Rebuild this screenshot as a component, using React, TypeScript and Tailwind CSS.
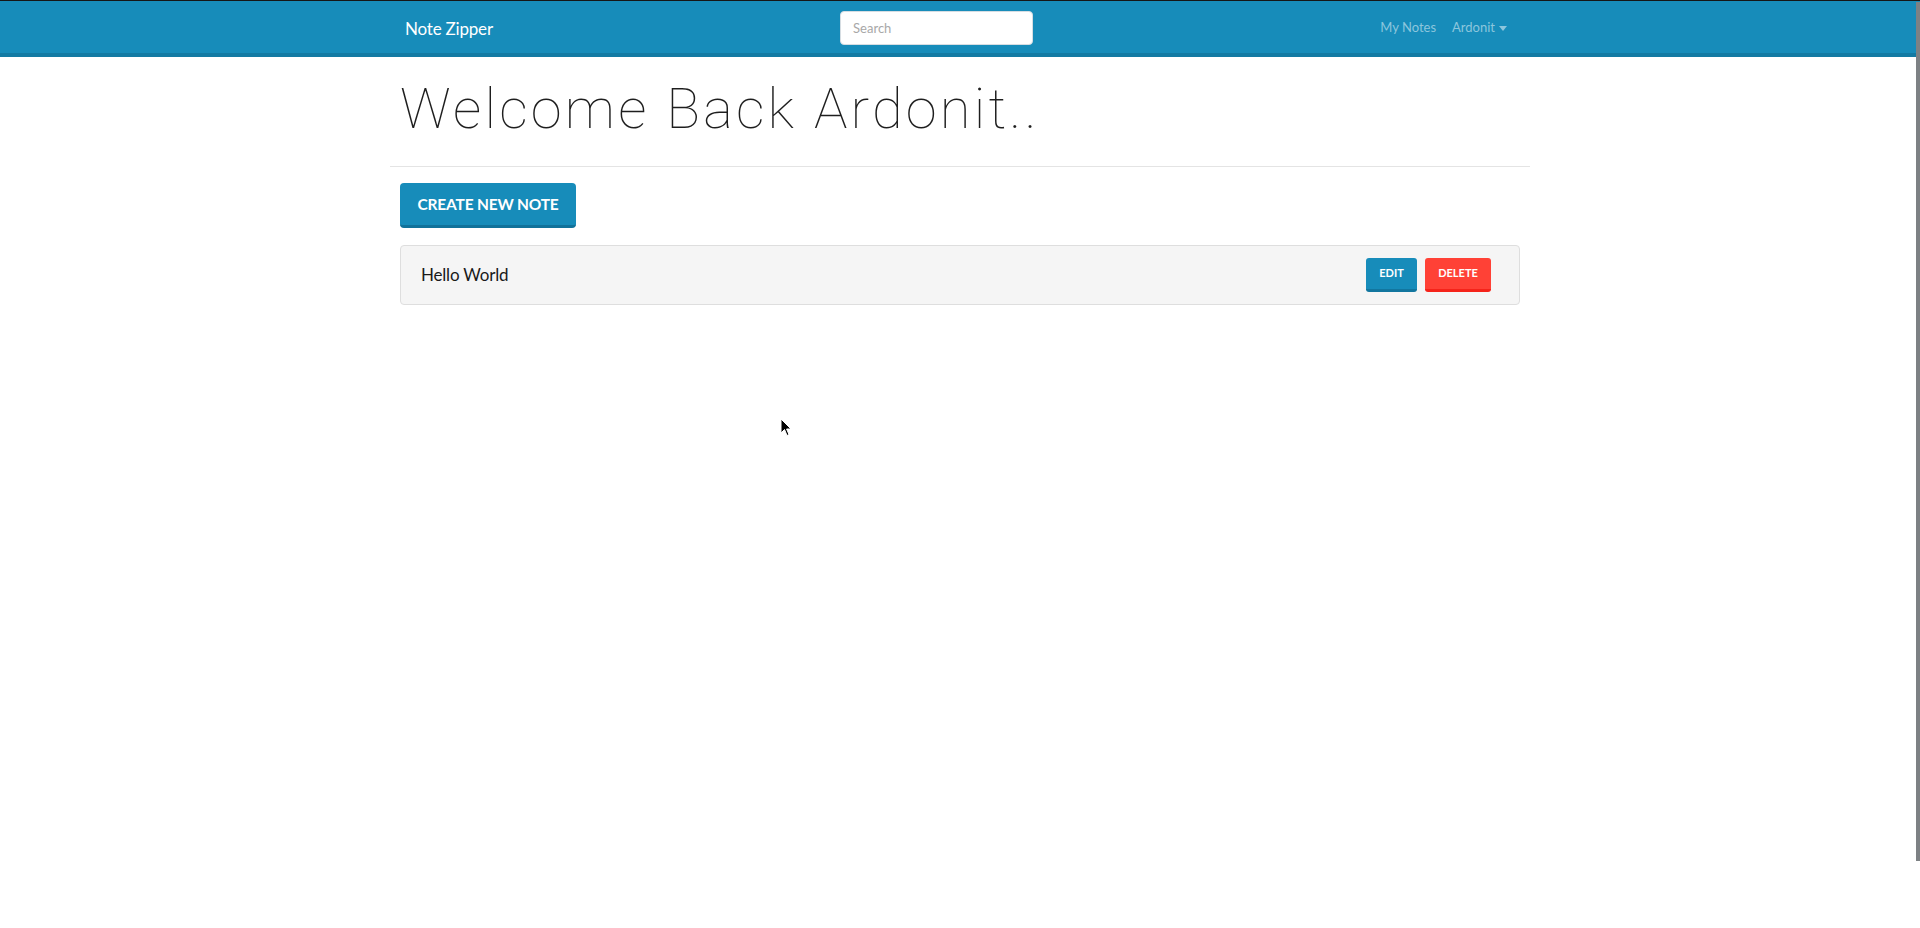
import React from "react";

export default function App() {
  return (
    <div className="relative min-h-screen bg-white font-['Lato','Liberation_Sans',sans-serif] text-[#222]">
      <nav className="h-[57px] bg-[#178cba] border-t border-t-[#161616] border-b-4 border-b-[#137aa3]">
        <div className="mx-auto flex h-full w-[1140px] items-center px-[15px] pt-[2px]">
          <span className="text-[17px] leading-none tracking-[-0.2px] text-white">Note Zipper</span>
          <div className="flex flex-1 justify-center">
            <input
              placeholder="Search"
              className="h-[34px] w-[193px] rounded-[4px] border border-[#d6dde2] bg-white px-[12px] text-[13px] text-[#222] placeholder:text-[#a8a8a8] outline-none"
            />
          </div>
          <div className="flex items-center gap-[16px] pr-[8px] text-[13px] text-[#8cc6dd]">
            <span>My Notes</span>
            <span className="flex items-center gap-[4px]">
              Ardonit
              <span className="inline-block h-0 w-0 border-x-[4px] border-t-[5px] border-x-transparent border-t-[#8cc6dd]" />
            </span>
          </div>
        </div>
      </nav>

      <main className="mx-auto w-[1140px]">
        <div className="px-[10px] pt-[19px] pb-[23px]">
          <h1 className="font-['Roboto',sans-serif] text-[56px] font-thin leading-[1.2] tracking-[3.2px] text-[#1e1e1e]">
            Welcome Back Ardonit..
          </h1>
        </div>
        <hr className="border-t border-[#e4e4e4]" />
        <div className="px-[10px] pt-[16px]">
          <button className="h-[45px] w-[176px] rounded-[4px] border-b-[3px] border-b-[#11729a] bg-[#178cba] text-[15.5px] font-bold uppercase tracking-[-0.2px] text-white">
            Create New Note
          </button>
          <div className="mt-[17px] flex h-[60px] items-center justify-between rounded-[4px] border border-[#dedede] bg-[#f5f5f5] pl-[20px] pr-[28px]">
            <span className="text-[17px] tracking-[-0.2px] text-[#1a1a1a]">Hello World</span>
            <div className="flex items-center gap-[8px]">
              <button className="h-[34px] w-[51px] rounded-[3px] border-b-[3px] border-b-[#12769f] bg-[#178cba] text-[11px] font-bold uppercase text-white">
                Edit
              </button>
              <button className="h-[34px] w-[66px] rounded-[3px] border-b-[3px] border-b-[#f5231a] bg-[#ff4136] text-[11px] font-bold uppercase text-white">
                Delete
              </button>
            </div>
          </div>
        </div>
      </main>

      <div className="absolute right-0 top-[2px] h-[859px] w-[4px] bg-[#7d8184]" />

      <svg className="absolute left-[780px] top-[418px]" width="12" height="19" viewBox="0 0 12 19">
        <path d="M1 1 L1 15 L4.5 11.5 L7 17.5 L9 16.6 L6.6 11 L11 11 Z" fill="#000" stroke="#fff" strokeWidth="1" />
      </svg>
    </div>
  );
}
